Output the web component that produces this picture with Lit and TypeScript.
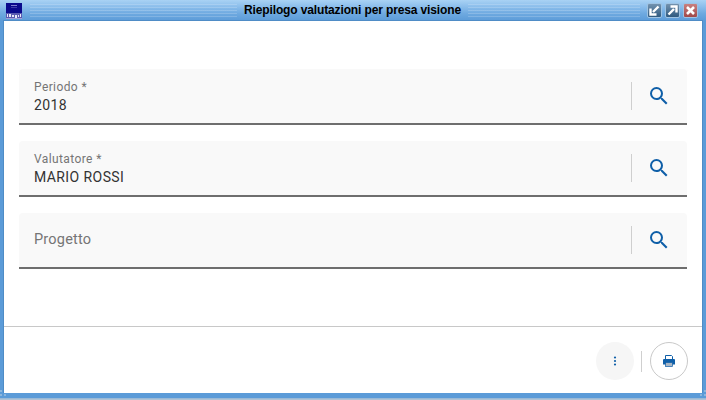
import { LitElement, html, css, svg } from "lit";
import { customElement } from "lit/decorators.js";

const search = svg`<svg class="sicon" width="24" height="24" viewBox="0 0 24 24"><path fill="#0f5fa8" d="M15.5 14h-.79l-.28-.27A6.47 6.47 0 0 0 16 9.5 6.5 6.5 0 1 0 9.5 16c1.61 0 3.09-.59 4.23-1.57l.27.28v.79l5 4.99L20.49 19l-4.99-5zm-6 0C7.01 14 5 11.99 5 9.5S7.01 5 9.5 5 14 7.01 14 9.5 11.99 14 9.5 14z"/></svg>`;

@customElement("app-root")
export class AppRoot extends LitElement {
  static styles = css`
    :host { display: block; width: 706px; height: 400px; font-family: Roboto, sans-serif; }
    .win { width: 706px; height: 400px; box-sizing: border-box; display: flex; flex-direction: column; background: #5b9bd8; position: relative; }
    .title { height: 21px; flex: none; display: flex; align-items: center;
      background: linear-gradient(#a9d2f4 0%, #8dbfec 30%, #6ea9e0 65%, #5b9bd8 100%); }
    .logo { width: 16px; height: 16px; margin-left: 6px; margin-top: 1px; flex: none; display: block; }
    .stripes { height: 13px; background: repeating-linear-gradient(rgba(255,255,255,.18) 0 1px, rgba(255,255,255,0) 1px 3px); }
    .sl { width: 207px; flex: none; margin-left: 8px; }
    .sr { flex: 1; }
    .t { font: bold 12px "Liberation Sans", Arial, sans-serif; letter-spacing: -.13px; color: #000; padding: 0 7px; white-space: nowrap; line-height: 21px; flex: none; }
    .btns { display: flex; gap: 3px; margin: 0 8px 0 7px; flex: none; }
    .wb { width: 13px; height: 13px; border-radius: 2px; border: 1px solid #9fc3e2; display: block; box-sizing: content-box; }
    .wb.a { background: linear-gradient(#7392ae, #2f5a80); }
    .wb.x { background: linear-gradient(#c98080, #a04848); }
    .content { flex: 1; margin: 0 4px; background: #fff; display: flex; flex-direction: column; min-height: 0; box-shadow: 0 0 0 1px #4f8cc6; }
    .fields { flex: none; display: flex; flex-direction: column; gap: 16px; padding: 48px 15px 0 15px; height: 305px; box-sizing: border-box; }
    .f { height: 56px; box-sizing: border-box; background: #f9f9f9; border-bottom: 2px solid #6e6e6e; border-radius: 4px 4px 0 0; display: flex; align-items: center; padding: 0 16px 0 15px; }
    .txt { flex: 1; display: flex; flex-direction: column; min-width: 0; padding-top: 2px; }
    .lab { font-size: 12px; line-height: 14px; color: #757575; letter-spacing: .4px; }
    .val { font-size: 14px; line-height: 20px; color: #333; letter-spacing: .42px; margin-top: 1px; }
    .ph { font-size: 14.5px; color: #757575; letter-spacing: .2px; margin-top: -4px; }
    .sep { width: 1px; height: 28px; background: #cfcfcf; flex: none; margin-right: 15px; }
    .sicon { display: block; flex: none; }
    .foot { flex: 1; border-top: 1px solid #c8c8c8; display: flex; align-items: center; justify-content: flex-end; padding: 2px 14px 0 0; }
    .round { width: 38px; height: 38px; border-radius: 50%; box-sizing: border-box; display: flex; align-items: center; justify-content: center; flex: none; }
    .more { background: #f6f6f6; }
    .print { border: 1px solid #c9c9c9; background: #fff; }
    .fsep { width: 1px; height: 21px; background: #cfcfcf; margin: 0 8px 0 7px; flex: none; }
    .bottom { height: 7px; flex: none; background: linear-gradient(#5b9bd8 0 5px, #8fb4d6 5px, #b9c8d6 100%); }
    .grip { position: absolute; display: block; }
    .gl { left: 0; bottom: 2px; }
    .gr { right: 0; bottom: 2px; }
  `;

  field(label: string, value: string) {
    return html`<div class="f">
      <div class="txt">
        ${value
          ? html`<span class="lab">${label}</span><span class="val">${value}</span>`
          : html`<span class="ph">${label}</span>`}
      </div>
      <span class="sep"></span>${search}
    </div>`;
  }

  render() {
    return html`<div class="win">
      <div class="title">
        <svg class="logo" viewBox="0 0 16 16"><rect width="16" height="16" fill="#0a0a8c"/><rect x="5" y="2" width="6" height="1" fill="#7f7fd0"/><rect x="5" y="4" width="6" height="1" fill="#3a3aa8"/><rect y="10" width="16" height="5" fill="#5a5ab0"/><path d="M1 11h1v3H1zM3 11h2v3H3zM6 12h2v2H6zM9 12h2v3H9zM12 12h1v2h-1zM14 11h1v3h-1z" fill="#e8e8f8"/><rect y="15" width="16" height="1" fill="#a0a0d8"/></svg>
        <span class="stripes sl"></span>
        <span class="t">Riepilogo valutazioni per presa visione</span>
        <span class="stripes sr"></span>
        <div class="btns">
          <svg class="wb a" viewBox="0 0 13 13"><path d="M10.5 2.5 5 8M2.5 4.5v6h6" fill="none" stroke="#fff" stroke-width="2.4"/></svg>
          <svg class="wb a" viewBox="0 0 13 13"><path d="M2.5 10.5 8 5M4.5 2.5h6v6" fill="none" stroke="#fff" stroke-width="2.4"/></svg>
          <svg class="wb x" viewBox="0 0 13 13"><path d="M3 3l7 7M10 3l-7 7" fill="none" stroke="#fff" stroke-width="2.6"/></svg>
        </div>
      </div>
      <div class="content">
        <div class="fields">
          ${this.field("Periodo *", "2018")}
          ${this.field("Valutatore *", "MARIO ROSSI")}
          ${this.field("Progetto", "")}
        </div>
        <div class="foot">
          <div class="round more"><svg width="12" height="12" viewBox="0 0 12 12"><g fill="#0f5fa8"><circle cx="6" cy="2.5" r="1.1"/><circle cx="6" cy="6" r="1.1"/><circle cx="6" cy="9.5" r="1.1"/></g></svg></div>
          <span class="fsep"></span>
          <div class="round print"><svg width="12" height="12" viewBox="0 0 12 12"><path d="M2.5.5h6l1 1v3h-7z" fill="#fff" stroke="#0f5fa8"/><path d="M0 5a1 1 0 0 1 1-1h10a1 1 0 0 1 1 1v4.500H0z" fill="#0f5fa8"/><rect x="2.500" y="7.500" width="7" height="4" fill="#a9b6c4" stroke="#0f5fa8" stroke-width=".7"/></svg></div>
        </div>
      </div>
      <div class="bottom"></div>
      <svg class="grip gl" width="8" height="8" viewBox="0 0 8 8"><path d="M0 0h2v2H0zM0 4h2v2H0zM4 4h2v2H4z" fill="#8db6dc"/></svg>
      <svg class="grip gr" width="8" height="8" viewBox="0 0 8 8"><path d="M6 0h2v2H6zM6 4h2v2H6zM2 4h2v2H2z" fill="#8db6dc"/></svg>
    </div>`;
  }
}
